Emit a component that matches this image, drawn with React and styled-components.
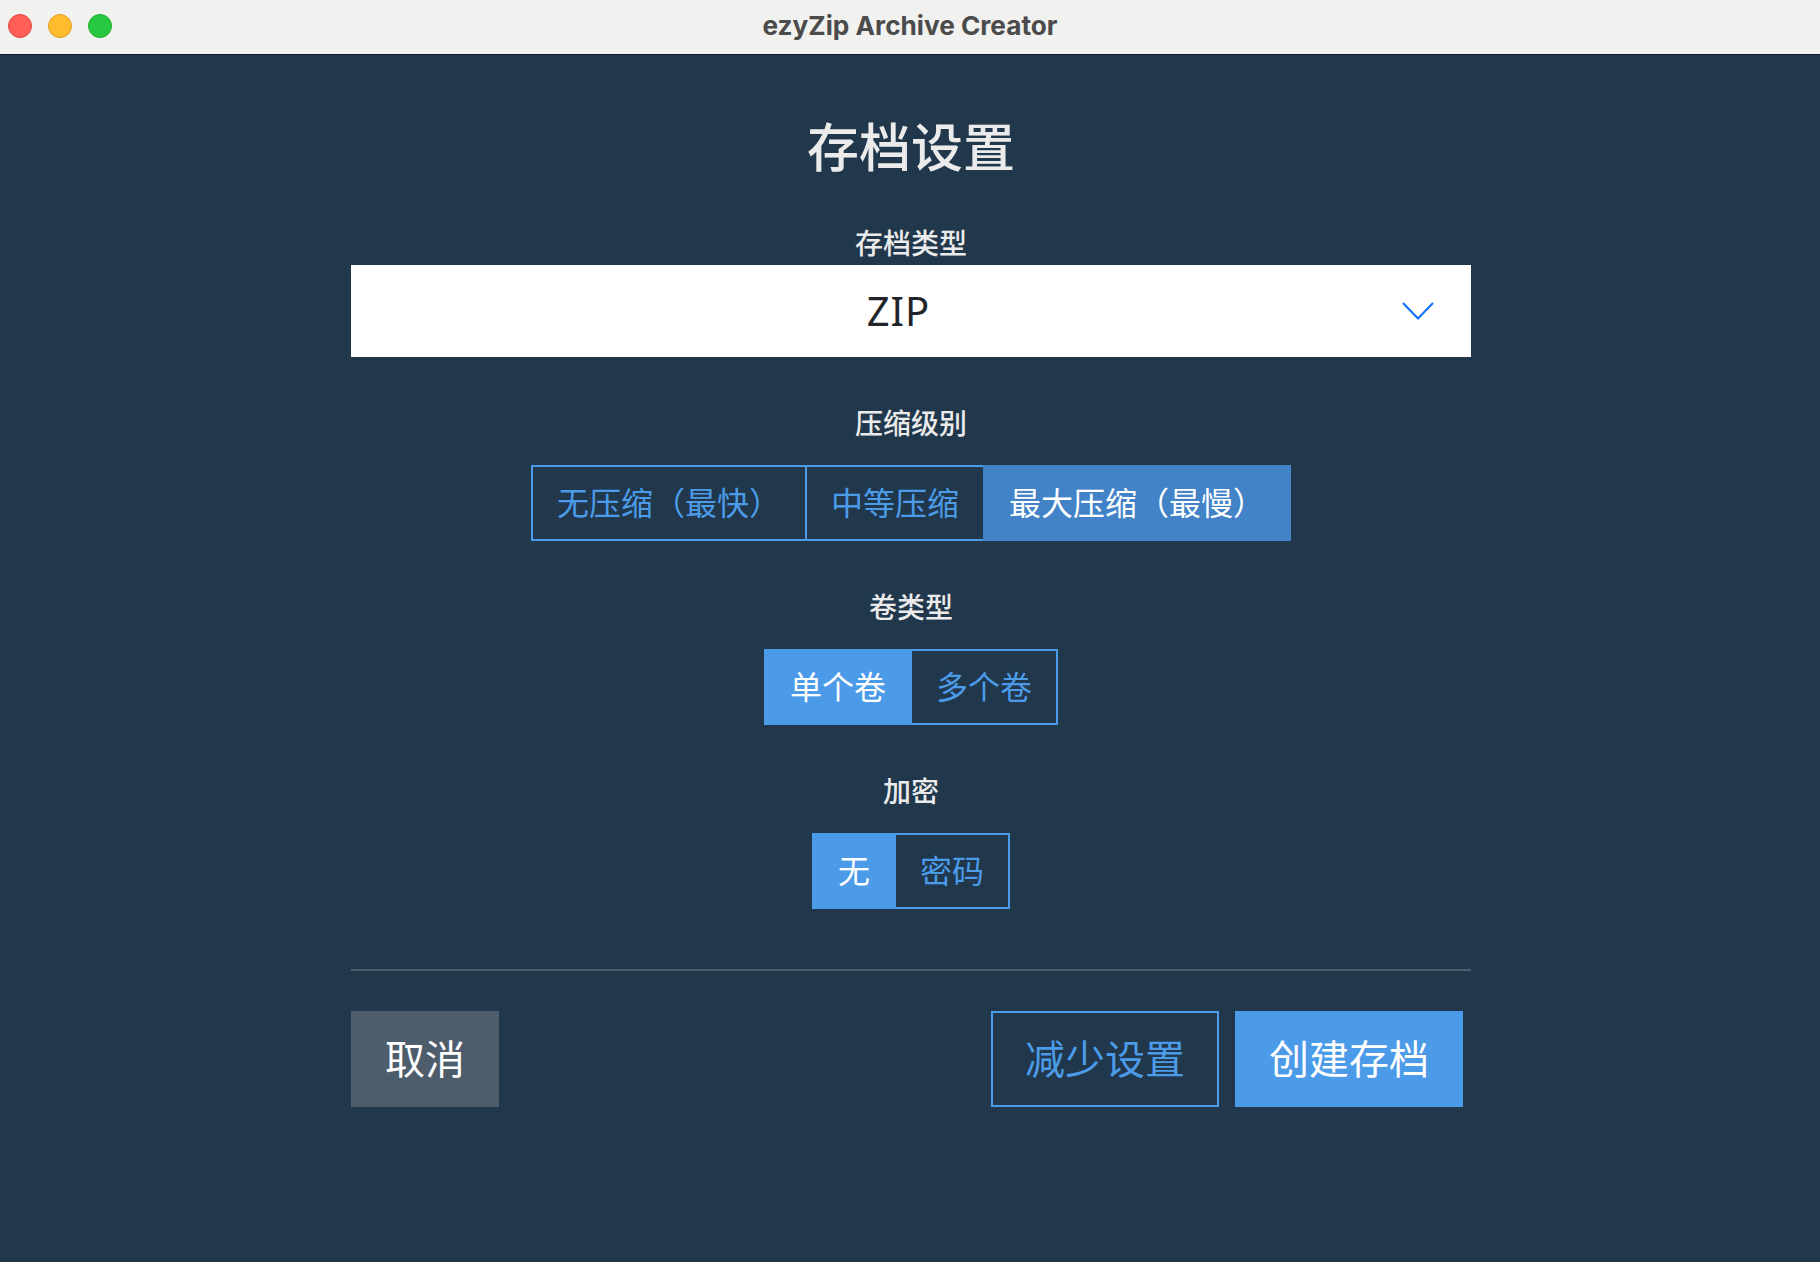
import React, { useState } from "react";
import styled, { createGlobalStyle } from "styled-components";

const GlobalStyle = createGlobalStyle`
  html, body {
    margin: 0;
    padding: 0;
    background: #20374c;
  }
  body {
    font-family: "Noto Sans CJK SC", "Noto Sans", sans-serif;
  }
  * {
    box-sizing: border-box;
  }
`;

const SEGMENTS = [
  { key: "level", label: "压缩级别", options: ["无压缩（最快）", "中等压缩", "最大压缩（最慢）"], initial: 2, focused: true },
  { key: "volume", label: "卷类型", options: ["单个卷", "多个卷"], initial: 0 },
  { key: "encrypt", label: "加密", options: ["无", "密码"], initial: 0 },
];

const SegmentField = ({ label, options, initial, focused }) => {
  const [selected, setSelected] = useState(initial);
  return (
    <Field>
      <Label>{label}</Label>
      <Group>
        {options.map((option, i) => (
          <Segment
            key={option}
            type="button"
            $active={i === selected}
            $focused={focused}
            onClick={() => setSelected(i)}
          >
            {option}
          </Segment>
        ))}
      </Group>
    </Field>
  );
};

const App = () => {
  return (
    <Window>
      <GlobalStyle />
      <TitleBar>
        <Lights>
          <Light $fill="#ff5f57" $edge="#e0443e" />
          <Light $fill="#febc2e" $edge="#dea123" />
          <Light $fill="#28c840" $edge="#1dad2b" />
        </Lights>
        <WindowTitle>ezyZip Archive Creator</WindowTitle>
      </TitleBar>
      <Content>
        <Heading>存档设置</Heading>
        <TypeLabel>存档类型</TypeLabel>
        <Select>
          ZIP
          <Chevron width="32" height="18" viewBox="0 0 32 18">
            <polyline points="1,1 16,16.5 31,1" fill="none" stroke="#0d6efd" strokeWidth="2" />
          </Chevron>
        </Select>
        {SEGMENTS.map(({ key, ...field }) => (
          <SegmentField key={key} {...field} />
        ))}
        <Divider />
        <Footer>
          <CancelButton type="button">取消</CancelButton>
          <FooterRight>
            <OutlineButton type="button">减少设置</OutlineButton>
            <PrimaryButton type="button">创建存档</PrimaryButton>
          </FooterRight>
        </Footer>
      </Content>
    </Window>
  );
};

export default App;

const Window = styled.div`
  min-height: 1262px;
  background: #20374c;
  color: #ebebeb;
`;

const TitleBar = styled.header`
  position: relative;
  height: 55px;
  padding-bottom: 3px;
  display: flex;
  align-items: center;
  justify-content: center;
  background: #f1f1ef;
  border-bottom: 1px solid #0c1a27;
`;

const Lights = styled.div`
  position: absolute;
  left: 8px;
  top: 14px;
  display: flex;
  gap: 16px;
`;

const Light = styled.span`
  width: 24px;
  height: 24px;
  border-radius: 50%;
  background: ${(p) => p.$fill};
  border: 1px solid ${(p) => p.$edge};
`;

const WindowTitle = styled.h1`
  margin: 0;
  font-family: "Inter", "Liberation Sans", sans-serif;
  font-size: 26.2px;
  font-weight: 700;
  color: #4b4b4b;
`;

const Content = styled.main`
  width: 1120px;
  margin-left: 351px;
  padding-top: 60px;
  display: flex;
  flex-direction: column;
`;

const Heading = styled.h2`
  margin: 0 0 45px;
  height: 62px;
  font-size: 52px;
  line-height: 60px;
  font-weight: 500;
  text-align: center;
`;

const Label = styled.div`
  height: 42px;
  margin-bottom: 21px;
  font-size: 28px;
  font-weight: 500;
  line-height: 40px;
  text-align: center;
`;

const TypeLabel = styled(Label)`
  margin-bottom: 1px;
`;

const Select = styled.div`
  position: relative;
  height: 92px;
  padding-right: 25px;
  background: #fff;
  color: #212529;
  font-family: "Noto Sans", sans-serif;
  font-size: 40px;
  letter-spacing: 1px;
  line-height: 92px;
  text-align: center;
`;

const Chevron = styled.svg`
  position: absolute;
  right: 37px;
  top: 37px;
`;

const Field = styled.section`
  margin-top: 45px;
  display: flex;
  flex-direction: column;
  align-items: center;
`;

const Group = styled.div`
  display: flex;
  height: 76px;
`;

const Segment = styled.button`
  height: 76px;
  padding: 0 24px 5px;
  margin: 0;
  font: inherit;
  font-size: 32px;
  line-height: 1;
  white-space: nowrap;
  border: 2px solid ${(p) => (p.$active && p.$focused ? "#4283c8" : "#4c9be8")};
  background: ${(p) => (p.$active ? (p.$focused ? "#4283c8" : "#4c9be8") : "transparent")};
  color: ${(p) => (p.$active ? "#fff" : "#4c9be8")};
  cursor: pointer;

  & + & {
    margin-left: -2px;
  }
`;

const Divider = styled.hr`
  width: 100%;
  height: 2px;
  margin: 60px 0 40px;
  border: none;
  background: #4e5d6c;
`;

const Footer = styled.footer`
  display: flex;
  justify-content: space-between;
  padding-right: 8px;
`;

const FooterRight = styled.div`
  display: flex;
  gap: 16px;
`;

const ActionButton = styled.button`
  height: 96px;
  padding: 0 34px 4px;
  font: inherit;
  font-size: 40px;
  line-height: 1;
  cursor: pointer;
`;

const CancelButton = styled(ActionButton)`
  border: none;
  background: #4e5d6c;
  color: #fff;
`;

const OutlineButton = styled(ActionButton)`
  padding: 0 32px 4px;
  border: 2px solid #4c9be8;
  background: transparent;
  color: #4c9be8;
`;

const PrimaryButton = styled(ActionButton)`
  border: none;
  background: #4c9be8;
  color: #fff;
`;
